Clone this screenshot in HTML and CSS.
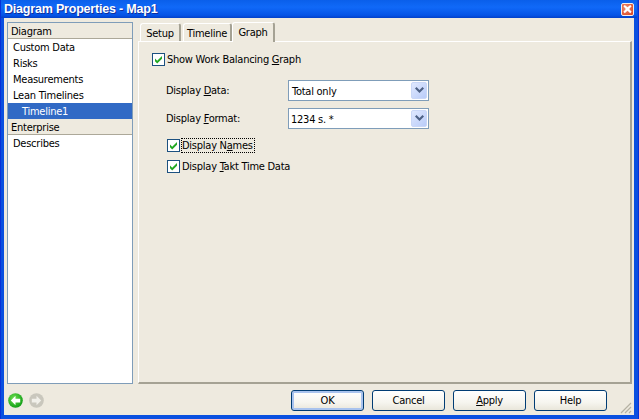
FILE: index.html
```html
<!DOCTYPE html>
<html>
<head>
<meta charset="utf-8">
<title>Diagram Properties - Map1</title>
<link rel="stylesheet" href="styles.css">
</head>
<body>
<div class="window">
  <div class="titlebar">
    <span class="title">Diagram Properties - Map1</span>
    <span class="close"><svg width="12" height="12" viewBox="0 0 12 12"><path d="M1.5 3 L3 1.5 L6 4.2 L9 1.5 L10.5 3 L7.8 6 L10.5 9 L9 10.5 L6 7.8 L3 10.5 L1.5 9 L4.2 6 Z" fill="#fff"/></svg></span>
  </div>
  <div class="client">
    <div class="main">
      <div class="sidebar">
        <div class="group">Diagram</div>
        <div class="item">Custom Data</div>
        <div class="item">Risks</div>
        <div class="item">Measurements</div>
        <div class="item">Lean Timelines</div>
        <div class="item sub selected">Timeline1</div>
        <div class="group">Enterprise</div>
        <div class="item">Describes</div>
      </div>
      <div class="tabarea">
        <div class="tabs">
          <div class="tab t-setup">Setup</div>
          <div class="tab t-timeline">Timeline</div>
          <div class="tab active t-graph">Graph</div>
        </div>
        <div class="panel">
          <label class="check top">
            <svg class="cb" width="13" height="13" viewBox="0 0 13 13"><rect x="0.5" y="0.5" width="12" height="12" fill="#fff" stroke="#1c5180"/><path d="M3 5.5 L5.2 7.7 L10 3 L10 5.8 L5.2 10.5 L3 8.3 Z" fill="#22a822"/></svg>
            <span>Show Work Balancing <u>G</u>raph</span>
          </label>
          <div class="field first">
            <span class="lbl">Display <u>D</u>ata:</span>
            <div class="select"><span class="val">Total only</span>
              <span class="arrow"><svg width="9" height="6" viewBox="0 0 9 6"><path d="M0 1.5 L1.5 0 L4.5 3 L7.5 0 L9 1.5 L4.5 6 Z" fill="#4d6185"/></svg></span>
            </div>
          </div>
          <div class="field">
            <span class="lbl">Display <u>F</u>ormat:</span>
            <div class="select"><span class="val tight">1234 s. *</span>
              <span class="arrow"><svg width="9" height="6" viewBox="0 0 9 6"><path d="M0 1.5 L1.5 0 L4.5 3 L7.5 0 L9 1.5 L4.5 6 Z" fill="#4d6185"/></svg></span>
            </div>
          </div>
          <label class="check inner names">
            <svg class="cb" width="13" height="13" viewBox="0 0 13 13"><rect x="0.5" y="0.5" width="12" height="12" fill="#fff" stroke="#1c5180"/><path d="M3 5.5 L5.2 7.7 L10 3 L10 5.8 L5.2 10.5 L3 8.3 Z" fill="#22a822"/></svg>
            <span class="focus">Display N<u>a</u>mes</span>
          </label>
          <label class="check inner takt">
            <svg class="cb" width="13" height="13" viewBox="0 0 13 13"><rect x="0.5" y="0.5" width="12" height="12" fill="#fff" stroke="#1c5180"/><path d="M3 5.5 L5.2 7.7 L10 3 L10 5.8 L5.2 10.5 L3 8.3 Z" fill="#22a822"/></svg>
            <span>Display <u>T</u>akt Time Data</span>
          </label>
        </div>
      </div>
    </div>
    <div class="footer">
      <div class="nav">
        <svg width="15" height="15" viewBox="0 0 16 16"><defs><radialGradient id="g1" cx="0.4" cy="0.35" r="0.7"><stop offset="0" stop-color="#6fe04f"/><stop offset="1" stop-color="#0b9a12"/></radialGradient></defs><circle cx="8" cy="8" r="7.8" fill="url(#g1)"/><path d="M8 3 L3 8 L8 13 L8 10 L13 10 L13 6 L8 6 Z" fill="#fff"/></svg>
        <svg width="15" height="15" viewBox="0 0 16 16"><circle cx="8" cy="8" r="7.8" fill="#c9c7bd"/><path d="M8 3 L13 8 L8 13 L8 10 L3 10 L3 6 L8 6 Z" fill="#f1f0ea"/></svg>
      </div>
      <div class="buttons">
        <button class="btn default">OK</button>
        <button class="btn">Cancel</button>
        <button class="btn"><u>A</u>pply</button>
        <button class="btn">Help</button>
      </div>
      <svg class="grip" width="12" height="12" viewBox="0 0 12 12"><path d="M11 1 L1 11 M11 5 L5 11 M11 9 L9 11" stroke="#b5b2a3" stroke-width="1.2" fill="none"/></svg>
    </div>
  </div>
</div>
</body>
</html>
```
FILE: styles.css
```css
* { box-sizing: border-box; }
html, body { margin: 0; padding: 0; }
body { width: 639px; height: 419px; overflow: hidden; font-family: "DejaVu Sans", sans-serif; font-stretch: condensed; font-size: 11px; letter-spacing: -0.25px; color: #000; }
.window { width: 639px; height: 419px; display: flex; flex-direction: column; background: #0a50e0; padding: 0 4px 4px 3px; border-left: 1px solid #0831d9; border-right: 1px solid #0831d9; }
.titlebar { height: 18px; margin: 0 -3px 0 -3px; flex: none; display: flex; align-items: center; justify-content: space-between; padding: 0 2px 0 3px; background: linear-gradient(#0a5fea, #1069f8 40%, #0453e6 85%, #0340c8); }
.title { color: #fff; font-family: "Liberation Sans", Arial, sans-serif; font-stretch: normal; font-weight: bold; font-size: 12.5px; letter-spacing: -0.2px; text-shadow: 1px 1px 0 #0f2f9e; }
.close { width: 13px; height: 13px; margin-right: 1px; border: 1px solid #f4eeea; border-radius: 2px; background: radial-gradient(circle at 35% 35%, #ee8e70, #d8401e); display: flex; align-items: center; justify-content: center; }
.client { flex: 1; background: #eeeadf; display: flex; flex-direction: column; padding: 4px 2px 0 3px; min-height: 0; }
.main { flex: 1; display: flex; gap: 5px; min-height: 0; }
.sidebar { width: 126px; background: #fff; border: 1px solid #7f9db9; display: flex; flex-direction: column; flex: none; height: 362px; }
.group { height: 16px; line-height: 17px; background: #eeeadf; border-bottom: 1px solid #aca899; padding-left: 3px; }
.item { height: 16px; line-height: 18px; padding-left: 5px; }
.item.sub { padding-left: 14px; }
.selected { background: #316ac5; color: #fff; }
.tabarea { width: 494px; display: flex; flex-direction: column; height: 362px; }
.tabs { height: 19px; flex: none; display: flex; padding-left: 2px; gap: 2px; align-items: flex-end; }
.tab { height: 18px; line-height: 19px; text-align: center; border-top: 1px solid #fff; border-left: 1px solid #fff; border-right: 2px solid #a5a294; border-radius: 3px 3px 0 0; }
.t-setup { width: 41px; }
.t-timeline { width: 49px; margin-right: -2px; }
.tab.active { height: 20px; margin-bottom: -1px; width: 43px; position: relative; z-index: 1; background: #eeeadf; }
.panel { flex: 1; border-top: 1px solid #fff; border-left: 1px solid #fff; border-right: 2px solid #a5a294; border-bottom: 2px solid #a5a294; padding: 11px 0 0 13px; display: flex; flex-direction: column; }
.check { display: flex; align-items: center; gap: 2px; height: 13px; }
.top { margin-bottom: 13px; }
.field { display: flex; align-items: center; height: 22px; padding-left: 14px; margin-bottom: 6px; }
.lbl { width: 122px; }
.select { width: 141px; height: 21px; border: 1px solid #7f9db9; background: #fff; display: flex; align-items: center; justify-content: space-between; padding: 1px; }
.val { padding: 2px 0 0 2px; }
.tight { padding: 3px 0 0 1px; }
.arrow { width: 16px; height: 17px; background: linear-gradient(135deg, #dfe8fe, #b9ccf9); border: 1px solid #c9d7f7; border-radius: 2px; display: flex; align-items: center; justify-content: center; }
.inner { padding-left: 15px; }
.names { margin-top: 4px; margin-bottom: 8px; }
.focus { outline: 1px dotted #000; outline-offset: 0; line-height: 13px; padding-right: 1px; }
.footer { height: 31px; flex: none; display: flex; align-items: center; position: relative; padding-top: 1px; }
.nav { display: flex; gap: 6px; padding-left: 1px; margin-right: 247px; }
.buttons { display: flex; gap: 8px; }
.btn { width: 73px; height: 21px; padding: 0; font-family: "DejaVu Sans", sans-serif; font-stretch: condensed; font-size: 11px; letter-spacing: -0.25px; color: #000; border: 1px solid #003c74; border-radius: 3px; background: linear-gradient(#fff, #f6f5ef 60%, #e9e6da); }
.btn.default { box-shadow: inset 0 0 0 2px #a9c3ee; }
.grip { position: absolute; right: 0; bottom: 1px; }
```
